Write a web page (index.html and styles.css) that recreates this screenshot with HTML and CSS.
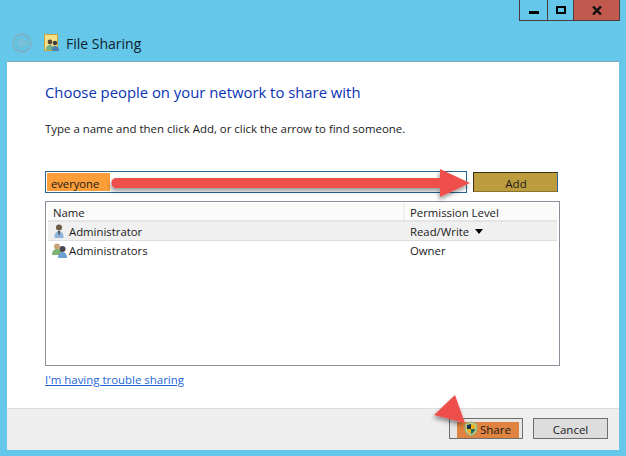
FILE: index.html
```html
<!DOCTYPE html>
<html lang="en">
<head>
<meta charset="utf-8">
<title>File Sharing</title>
<link rel="stylesheet" href="styles.css">
</head>
<body>
<div class="window">
  <div class="chrome">
    <div class="caption">
      <div class="cap cap-min"><span class="glyph-min"></span></div>
      <div class="cap cap-max"><span class="glyph-max"></span></div>
      <div class="cap cap-close">
        <svg width="10" height="9" viewBox="0 0 10 9"><path d="M1 .5 9 8.500M9 .5 1 8.500" stroke="#111" stroke-width="2.400" fill="none"/></svg>
      </div>
    </div>
    <div class="titlebar">
      <svg class="back" width="20" height="20" viewBox="0 0 20 20"><circle cx="10" cy="10" r="9" fill="#64c3e3" stroke="#86aabd" stroke-width="1.300"/><path d="M15.500 8.500H10V5.500L5 10l5 4.500V11.500H15.500z" fill="#6fc6e3" stroke="#8fb3c6" stroke-width="1"/></svg>
      <svg class="appicon" width="16" height="18" viewBox="0 0 16 18">
        <rect x=".5" y=".5" width="13" height="16" fill="#f6e08a" stroke="#c9a53f"/>
        <circle cx="6" cy="8" r="2.400" fill="#5a4a38"/><path d="M2 16c0-4 2-5 4-5s4 1 4 5z" fill="#6fb18e"/>
        <circle cx="11" cy="9" r="2.200" fill="#3c3c44"/><path d="M8 17c0-4 1.500-5 3-5s4 1 4 5z" fill="#4a7fb5"/>
      </svg>
      <span class="title">File Sharing</span>
    </div>
  </div>
  <div class="panel">
    <div class="content">
      <h1 class="heading">Choose people on your network to share with</h1>
      <p class="hint">Type a name and then click Add, or click the arrow to find someone.</p>
      <div class="add-row">
        <div class="input"><span class="selected">everyone</span></div>
        <div class="add-btn">Add</div>
      </div>
      <div class="list">
        <div class="list-head">
          <div class="col-name">Name</div>
          <div class="col-perm">Permission Level</div>
        </div>
        <div class="row row-active">
          <div class="col-name">
            <svg class="ico" width="14" height="16" viewBox="2 0 12 16"><circle cx="8" cy="4.500" r="3" fill="#6b5a48"/><path d="M3.500 15c0-5 2-7 4.500-7s4.500 2 4.500 7z" fill="#8fb4d8"/><path d="M7 8h2l-.5 4h-1z" fill="#4a4a52"/></svg>
            <span class="cell-text">Administrator</span>
          </div>
          <div class="col-perm">Read/Write <span class="caret"></span></div>
        </div>
        <div class="row">
          <div class="col-name">
            <svg class="ico" width="17" height="16" viewBox="0 0 17 16"><circle cx="6" cy="4.500" r="3" fill="#c9a27a"/><path d="M1 13c0-4 2-6 5-6s5 2 5 6z" fill="#7db36f"/><circle cx="11.500" cy="7" r="3" fill="#4a4650"/><path d="M7 16c0-4 2-6 4.500-6S16 12 16 16z" fill="#6f9fd0"/></svg>
            <span class="cell-text">Administrators</span>
          </div>
          <div class="col-perm">Owner</div>
        </div>
      </div>
      <a class="link" href="#">I'm having trouble sharing</a>
    </div>
    <div class="footer">
      <div class="btn btn-share">
        <span class="share-fill">
          <svg class="shield" width="14" height="16" viewBox="0 0 14 15"><path d="M7 .5 13 2.500V8c0 3-3 5.500-6 6.500C4 13.500 1 11 1 8V2.500z" fill="#b9c98a" stroke="#9aa86a"/><path d="M7 2.500 3 3.500V7.500H7z" fill="#16324f"/><path d="M7 2.500V7.500H11V3.500z" fill="#f2b21c"/><path d="M3 7.500C3 10 5 11.500 7 12.500V7.500z" fill="#f2b21c"/><path d="M7 7.500V12.500C9 11.500 11 10 11 7.500z" fill="#1f6a5a"/></svg>
          <span class="share-label">Share</span>
        </span>
      </div>
      <div class="btn btn-cancel">Cancel</div>
    </div>
  </div>
  <svg class="annotations" width="626" height="456" viewBox="0 0 626 456">
    <defs>
      <filter id="shadow" x="-10%" y="-30%" width="120%" height="170%">
        <feDropShadow dx="-1" dy="3" stdDeviation="2" flood-color="#000" flood-opacity=".4"/>
      </filter>
    </defs>
    <path filter="url(#shadow)" fill="#ef4f4b" d="M116 178 440 178V169L470 183 440 197V188L116 188C110 188 110 178 116 178Z"/>
    <path filter="url(#shadow)" fill="#ef4f4b" d="M455 395 434 415 465 423Z"/>
  </svg>
</div>
</body>
</html>
```

FILE: styles.css
```css
* { box-sizing: border-box; }
html, body { margin: 0; padding: 0; }
body { width: 626px; height: 456px; overflow: hidden; font-family: "Open Sans", "Noto Sans", sans-serif; color: #1a1a1a; }
.window { position: relative; width: 626px; height: 456px; background: #65c8ea; display: flex; flex-direction: column; padding: 0 7px 6px; }
.chrome { height: 61px; flex: none; display: flex; flex-direction: column; }
.caption { display: flex; justify-content: flex-end; height: 21px; margin-right: -1px; }
.cap { height: 21px; border: 1px solid #4d3b3b; border-top: 0; display: flex; align-items: center; justify-content: center; }
.cap + .cap { border-left: 0; }
.cap-min { width: 29px; }
.cap-max { width: 26px; }
.cap-close { width: 46px; background: #c1594f; }
.glyph-min { width: 10px; height: 3px; background: #000; margin-top: 5px; }
.glyph-max { width: 10px; height: 8px; border: 2px solid #000; margin-top: -1px; }
.titlebar { display: flex; align-items: center; height: 24px; margin-top: 10px; padding-left: 5px; }
.back { margin-right: 12px; }
.appicon { margin-right: 6px; }
.title { font-size: 14px; color: #10222c; }
.panel { flex: 1; display: flex; flex-direction: column; background: #fff; border-top: 1px solid #85a9bb; }
.content { flex: 1; padding: 0 59px 0 38px; display: flex; flex-direction: column; }
.heading { margin: 20px 0 0; font-size: 14.850px; line-height: 20px; font-weight: 400; color: #0733b4; }
.hint { margin: 19px 0 0; font-size: 11.450px; line-height: 16px; }
.add-row { display: flex; margin-top: 34px; height: 22px; gap: 6px; padding-right: 1px; align-items: center; }
.input { width: 422px; height: 22px; border: 1px solid #2a6592; padding: 1px; display: flex; }
.selected { width: 63px; background: #fb9d38; font-size: 11.200px; line-height: 21px; padding-left: 4px; overflow: hidden; }
.add-btn { width: 85px; height: 20px; background: #bd9c3e; border: 1px solid #3b2d10; border-right: 1px solid #2a6592; border-bottom-color: #8a7430; font-size: 11.500px; line-height: 21px; text-align: center; padding-left: 1px; overflow: hidden; }
.list { margin-top: 8px; height: 165px; width: 515px; border: 1px solid #8a8f9c; padding: 1px 2px; font-size: 11.350px; }
.list-head { display: flex; line-height: 20px; background: #fbfbfb; border-bottom: 2px solid #e4e4e4; height: 19px; }
.row { display: flex; height: 19px; line-height: 20px; }
.row-active { background: #f0f0f0; border-bottom: 1px solid #dedede; }
.col-name { width: 355px; padding-left: 5px; display: flex; align-items: flex-start; }
.row .col-name { padding-left: 3px; }
.col-perm { flex: 1; padding-left: 5px; border-left: 2px solid #f0f0f0; }
.row .col-perm { border-left-color: transparent; }
.ico { margin-right: 1px; margin-top: 1px; flex: none; }
.row-active .ico { margin-left: 1px; margin-right: 3px; }
.caret { display: inline-block; width: 0; height: 0; border: 4.500px solid transparent; border-top: 5px solid #000; border-bottom: 0; margin-left: 3px; vertical-align: 2px; }
.link { margin-top: 6px; font-size: 11.450px; line-height: 16px; color: #2466d6; }
.footer { height: 42px; flex: none; background: #eeeeee; border-top: 1px solid #dcdcdc; display: flex; justify-content: flex-end; align-items: flex-start; gap: 10px; padding: 9px 11px 0 0; }
.btn { height: 21px; border: 1px solid #6e6e6e; font-size: 11.500px; line-height: 21px; text-align: center; }
.btn-share { width: 74px; background: #e6e6e6; padding: 3px 3px 0 7px; }
.share-fill { display: flex; align-items: center; height: 16px; background: #e08340; padding: 0 0 1px 7px; }
.shield { margin-top: -2px; }
.share-label { margin-left: 2px; }
.btn-cancel { width: 75px; background: #dddddd; }
.annotations { position: absolute; left: 0; top: 0; pointer-events: none; }
```
